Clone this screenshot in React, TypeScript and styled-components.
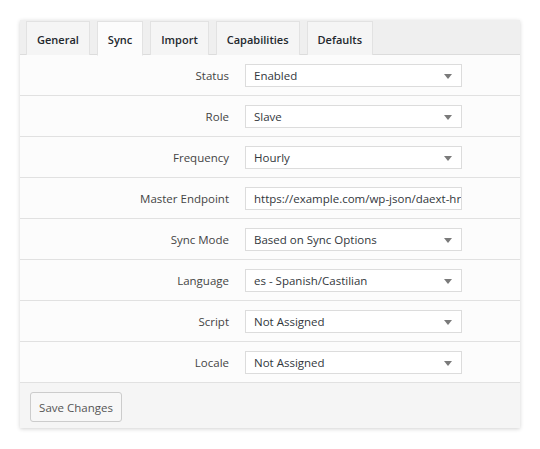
import React from "react";
import styled, { createGlobalStyle } from "styled-components";

const Global = createGlobalStyle`
  html, body { margin: 0; padding: 0; background: #fff; }
  body { font-family: "Open Sans", "Noto Sans", sans-serif; font-size: 11.5px; color: #32373c; }
  * { box-sizing: border-box; }
`;

const Page = styled.div`
  padding: 20px;
`;

const Card = styled.div`
  width: 500px;
  background: #fcfcfc;
  box-shadow: 0 1px 4px rgba(0, 0, 0, 0.18);
`;

const TabBar = styled.div`
  display: flex;
  gap: 7px;
  padding: 1px 6px 0;
  background: #efefef;
  border-bottom: 1px solid #dcdcdc;
  height: 35px;
`;

const Tab = styled.div<{ $active?: boolean }>`
  padding: 1px 10px 0;
  display: flex;
  align-items: center;
  font-size: 11px;
  font-weight: 600;
  color: #23282d;
  background: ${(p) => (p.$active ? "#fcfcfc" : "#f5f5f5")};
  border: 1px solid #e2e2e2;
  border-bottom: ${(p) => (p.$active ? "1px solid #fcfcfc" : "none")};
  height: ${(p) => (p.$active ? "35px" : "34px")};
`;

const Row = styled.div`
  display: grid;
  grid-template-columns: 209px 217px;
  column-gap: 16px;
  align-items: center;
  height: 41px;
  padding-top: 1px;
  border-bottom: 1px solid #e1e1e1;
`;

const Label = styled.div`
  text-align: right;
  color: #444;
`;

const Field = styled.div`
  position: relative;
  height: 23px;
  border: 1px solid #dcdcdc;
  background: #fff;
  display: flex;
  align-items: center;
  padding: 0 8px;
  color: #32373c;
  white-space: nowrap;
  overflow: hidden;
`;

const Arrow = styled.span`
  position: absolute;
  right: 9px;
  top: 9px;
  width: 0;
  height: 0;
  border-left: 4px solid transparent;
  border-right: 4px solid transparent;
  border-top: 5px solid #7a7a7a;
`;

const Footer = styled.div`
  background: #f5f5f5;
  padding: 9px 10px 6px;
  height: 45px;
`;

const Button = styled.button`
  font-family: inherit;
  font-size: 11.5px;
  color: #555;
  background: #f7f7f7;
  border: 1px solid #cccccc;
  border-radius: 3px;
  height: 30px;
  width: 92px;
  padding: 0;
`;

const tabs = ["General", "Sync", "Import", "Capabilities", "Defaults"];

const rows: { label: string; value: string; select: boolean }[] = [
  { label: "Status", value: "Enabled", select: true },
  { label: "Role", value: "Slave", select: true },
  { label: "Frequency", value: "Hourly", select: true },
  { label: "Master Endpoint", value: "https://example.com/wp-json/daext-hreflang-manager", select: false },
  { label: "Sync Mode", value: "Based on Sync Options", select: true },
  { label: "Language", value: "es - Spanish/Castilian", select: true },
  { label: "Script", value: "Not Assigned", select: true },
  { label: "Locale", value: "Not Assigned", select: true },
];

export default function App() {
  return (
    <Page>
      <Global />
      <Card>
        <TabBar>
          {tabs.map((t) => (
            <Tab key={t} $active={t === "Sync"}>
              {t}
            </Tab>
          ))}
        </TabBar>
        {rows.map((r) => (
          <Row key={r.label}>
            <Label>{r.label}</Label>
            <Field>
              {r.value}
              {r.select && <Arrow />}
            </Field>
          </Row>
        ))}
        <Footer>
          <Button>Save Changes</Button>
        </Footer>
      </Card>
    </Page>
  );
}
